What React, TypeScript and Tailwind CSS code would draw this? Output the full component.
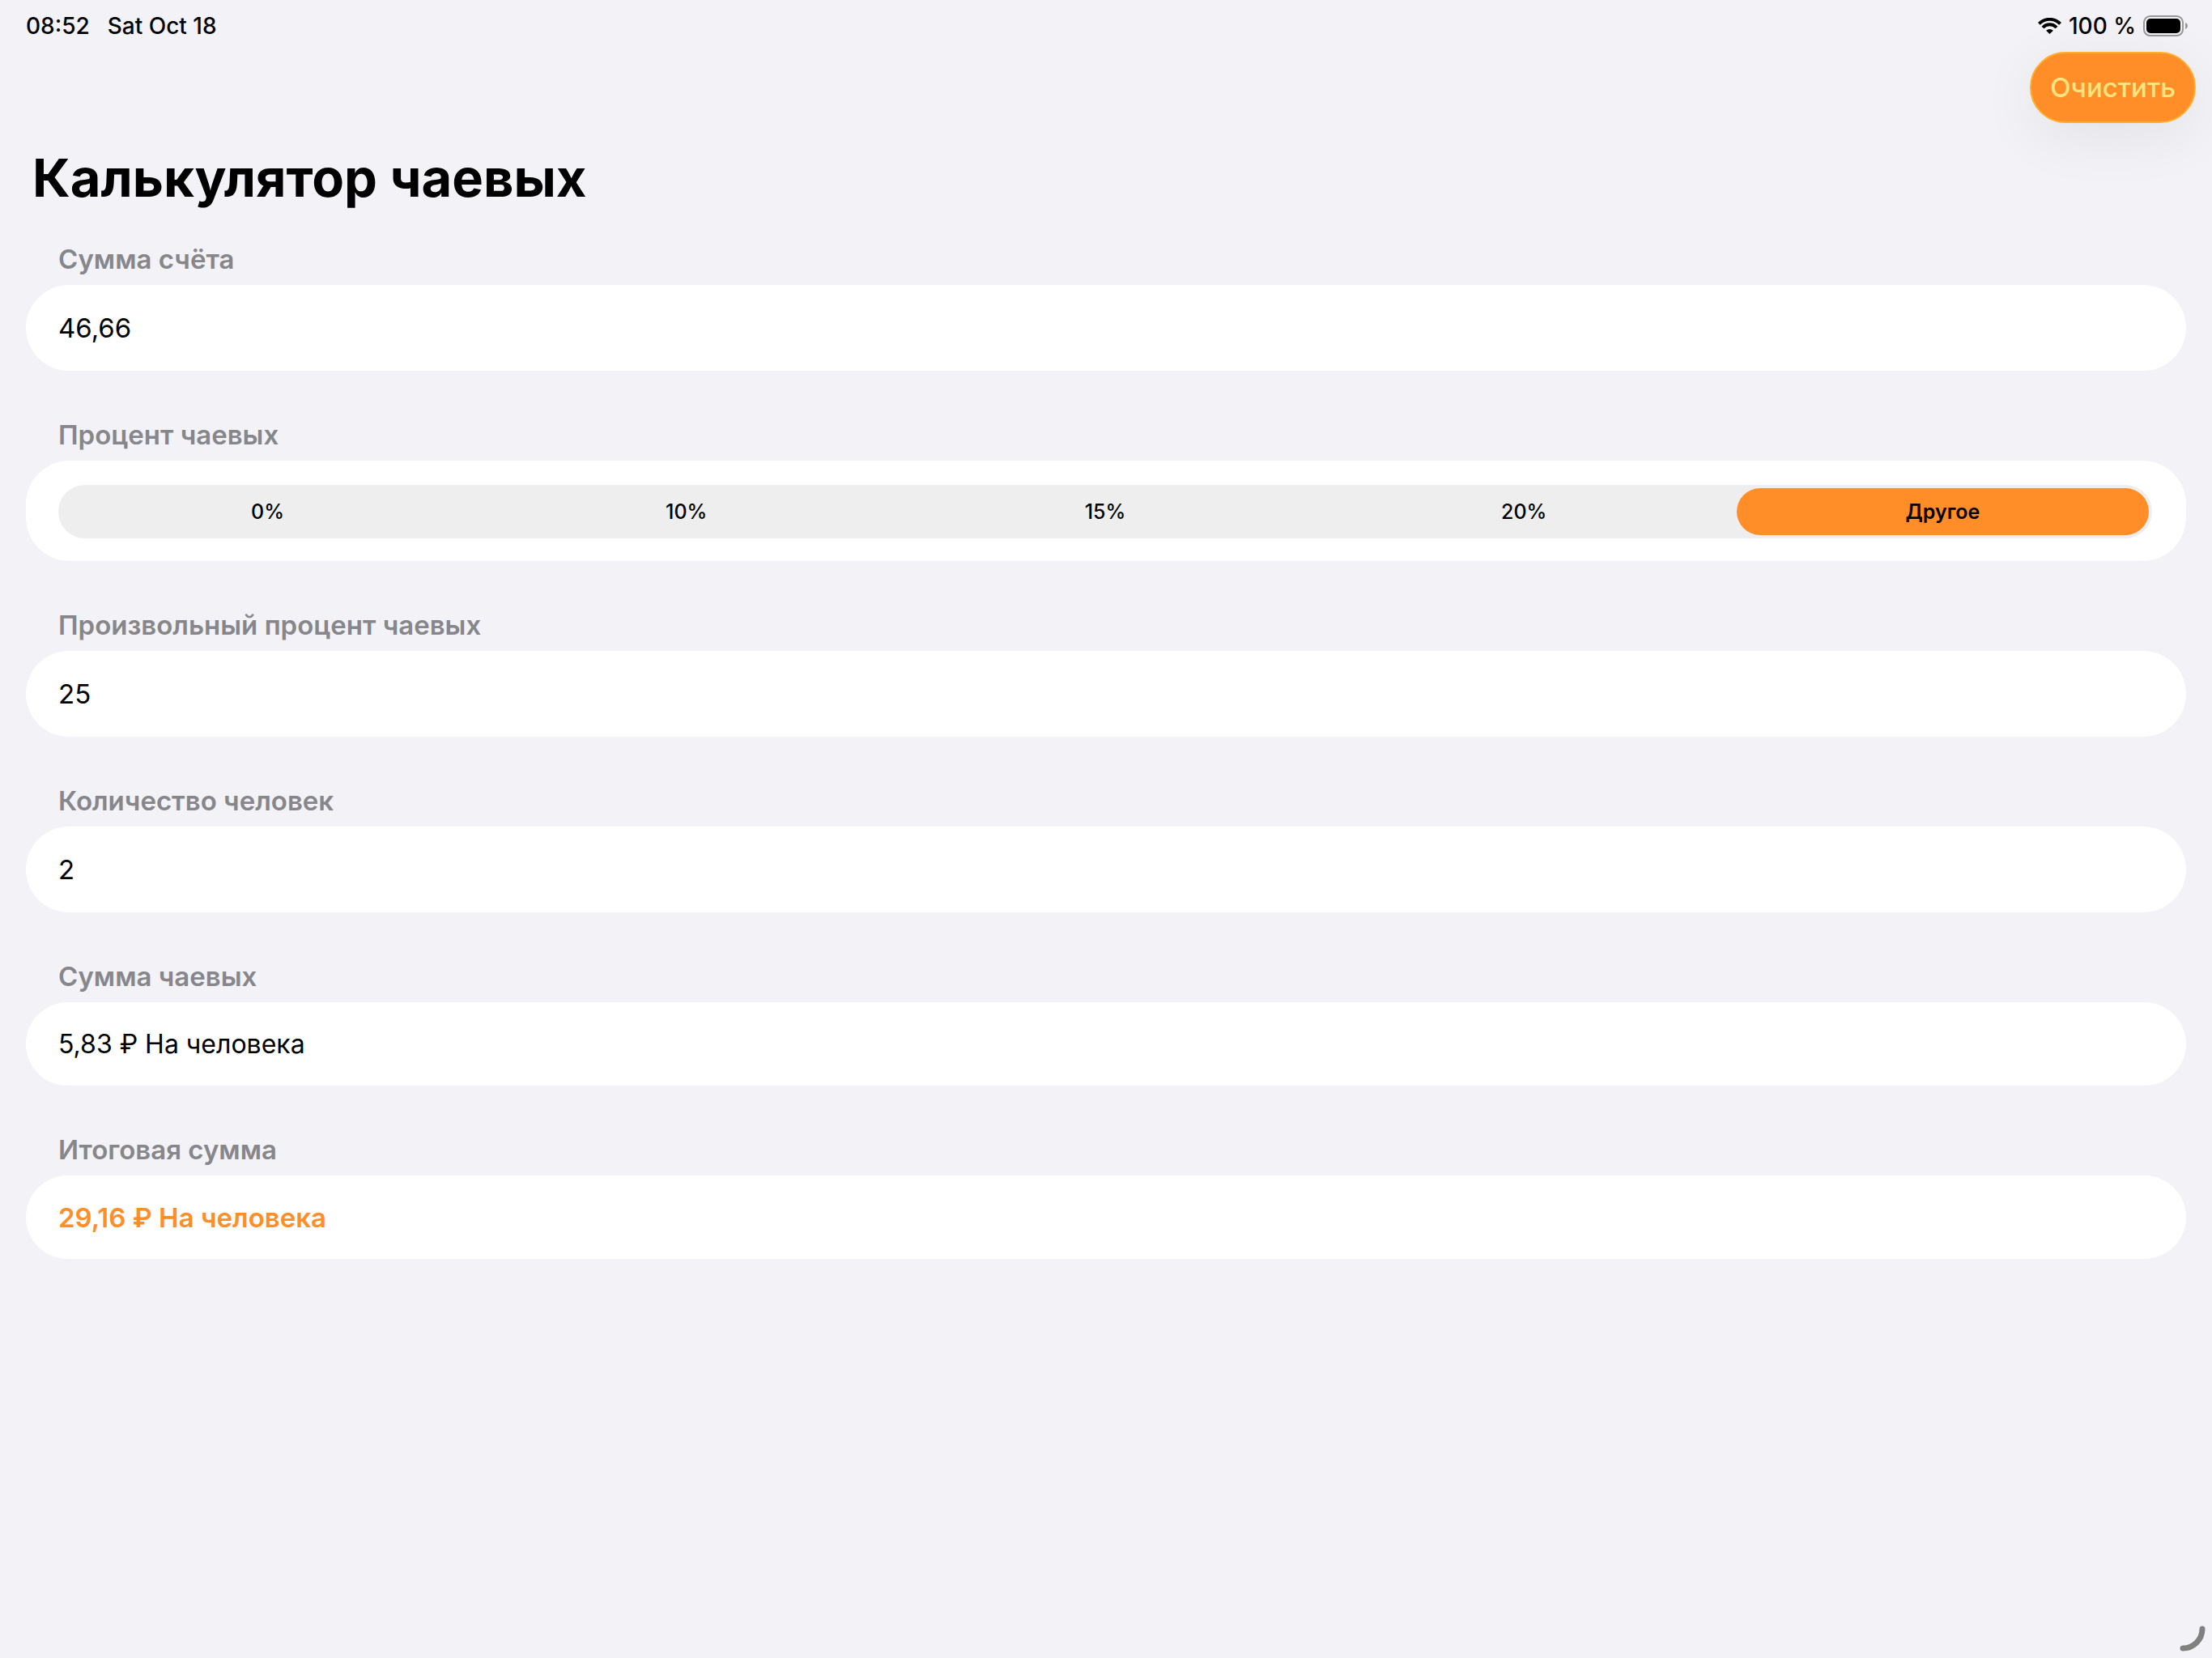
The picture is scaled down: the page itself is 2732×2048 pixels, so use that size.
import { useState } from "react";
import type { ReactNode } from "react";

const TIP_OPTIONS = ["0%", "10%", "15%", "20%", "Другое"];
const CUSTOM = "Другое";

function parse(value: string) {
  return parseFloat(value.replace(",", ".")) || 0;
}

function money(value: number) {
  return value.toFixed(2).replace(".", ",") + "\u00a0₽";
}

function WifiIcon() {
  return (
    <svg className="h-5 w-[29px]" viewBox="0 0 29 20" fill="none" aria-hidden="true">
      <path d="M1.4 7.4A18.2 18.2 0 0 1 27.6 7.4" stroke="#000" strokeWidth="4" />
      <path d="M6 12A11.7 11.7 0 0 1 23 12" stroke="#000" strokeWidth="4" />
      <path d="M14.5 20L10.1 15.8A6.3 6.3 0 0 1 18.9 15.8Z" fill="#000" />
    </svg>
  );
}

function BatteryIcon() {
  return (
    <svg className="h-[26px] w-[55px]" viewBox="0 0 55 26" fill="none" aria-hidden="true">
      <rect x="1" y="1" width="48" height="24" rx="7.6" stroke="#98989b" strokeWidth="2" />
      <rect x="4" y="4" width="42" height="18" rx="5" fill="#000" />
      <path d="M52 9C54 9.8 55 11.2 55 13C55 14.8 54 16.2 52 17Z" fill="#98989b" />
    </svg>
  );
}

function Section({ title, htmlFor, children }: { title: string; htmlFor?: string; children: ReactNode }) {
  return (
    <section className="flex flex-col gap-3">
      <h2 className="px-10 text-[33px] leading-10 font-semibold text-[#86868b]">
        {htmlFor ? <label htmlFor={htmlFor}>{title}</label> : title}
      </h2>
      {children}
    </section>
  );
}

function Field({ id, title, value, onChange }: { id: string; title: string; value: string; onChange: (v: string) => void }) {
  return (
    <Section title={title} htmlFor={id}>
      <input
        id={id}
        type="text"
        inputMode="decimal"
        value={value}
        onChange={(e) => onChange(e.target.value)}
        className="h-[106px] w-full rounded-[53px] bg-white px-10 text-[33px] leading-10 text-black outline-none"
      />
    </Section>
  );
}

export default function App() {
  const [bill, setBill] = useState("46,66");
  const [tip, setTip] = useState(CUSTOM);
  const [customTip, setCustomTip] = useState("25");
  const [people, setPeople] = useState("2");

  const percent = tip === CUSTOM ? parse(customTip) : parse(tip);
  const count = Math.max(1, parse(people));
  const tipEach = (parse(bill) * percent) / 100 / count;
  const totalEach = parse(bill) / count + tipEach;

  function clear() {
    setBill("");
    setCustomTip("");
    setPeople("");
  }

  return (
    <div className="relative min-h-screen bg-[#f2f2f7] font-['Inter','Noto_Sans',sans-serif] text-black">
      <header>
        <div className="flex h-16 items-center justify-between pr-[30px] pl-8 text-[28px] leading-8 font-medium">
          <div className="flex gap-[22px]">
            <span>08:52</span>
            <span>Sat Oct 18</span>
          </div>
          <div className="flex items-center gap-[9px]">
            <WifiIcon />
            <span>100 %</span>
            <BatteryIcon />
          </div>
        </div>
        <div className="flex justify-end pr-5">
          <button
            type="button"
            onClick={clear}
            className="h-[88px] rounded-full border-2 border-[#ffae2e] bg-[#ff8d28] px-[23px] text-[33px] leading-10 font-medium text-[#ffe57f] shadow-[0_16px_72px_rgba(0,0,0,0.07)]"
          >
            Очистить
          </button>
        </div>
        <h1 className="px-10 pt-7 pb-10 text-[65px] leading-20 font-bold">Калькулятор чаевых</h1>
      </header>

      <main className="flex flex-col gap-[59px] px-8">
        <Field id="bill" title="Сумма счёта" value={bill} onChange={setBill} />

        <Section title="Процент чаевых">
          <div className="rounded-[54px] bg-white pt-[30px] pr-[42px] pb-7 pl-10">
            <div role="radiogroup" aria-label="Процент чаевых" className="grid h-[66px] grid-cols-5 rounded-full bg-[#eeeeee]">
              {TIP_OPTIONS.map((option) => (
                <label key={option} className="flex p-1">
                  <input
                    type="radio"
                    name="tip"
                    value={option}
                    checked={tip === option}
                    onChange={() => setTip(option)}
                    className="peer sr-only"
                  />
                  <span className="flex flex-1 items-center justify-center rounded-full text-[25px] leading-8 font-medium peer-checked:bg-[#ff8d28] peer-checked:font-semibold">
                    {option}
                  </span>
                </label>
              ))}
            </div>
          </div>
        </Section>

        <Field id="custom-tip" title="Произвольный процент чаевых" value={customTip} onChange={setCustomTip} />
        <Field id="people" title="Количество человек" value={people} onChange={setPeople} />

        <Section title="Сумма чаевых">
          <p className="flex h-[103px] items-center rounded-full bg-white px-10 text-[32px] leading-10">
            {money(tipEach)} На человека
          </p>
        </Section>

        <Section title="Итоговая сумма">
          <p className="flex h-[103px] items-center rounded-full bg-white px-10 text-[33px] leading-10 font-semibold text-[#ff8d28]">
            {money(totalEach)} На человека
          </p>
        </Section>
      </main>

      <svg className="absolute right-2 bottom-2 size-8" viewBox="0 0 32 32" fill="none" aria-hidden="true">
        <path d="M28 4A24 24 0 0 1 4 28" stroke="#808080" strokeWidth="7" strokeLinecap="round" />
      </svg>
    </div>
  );
}
